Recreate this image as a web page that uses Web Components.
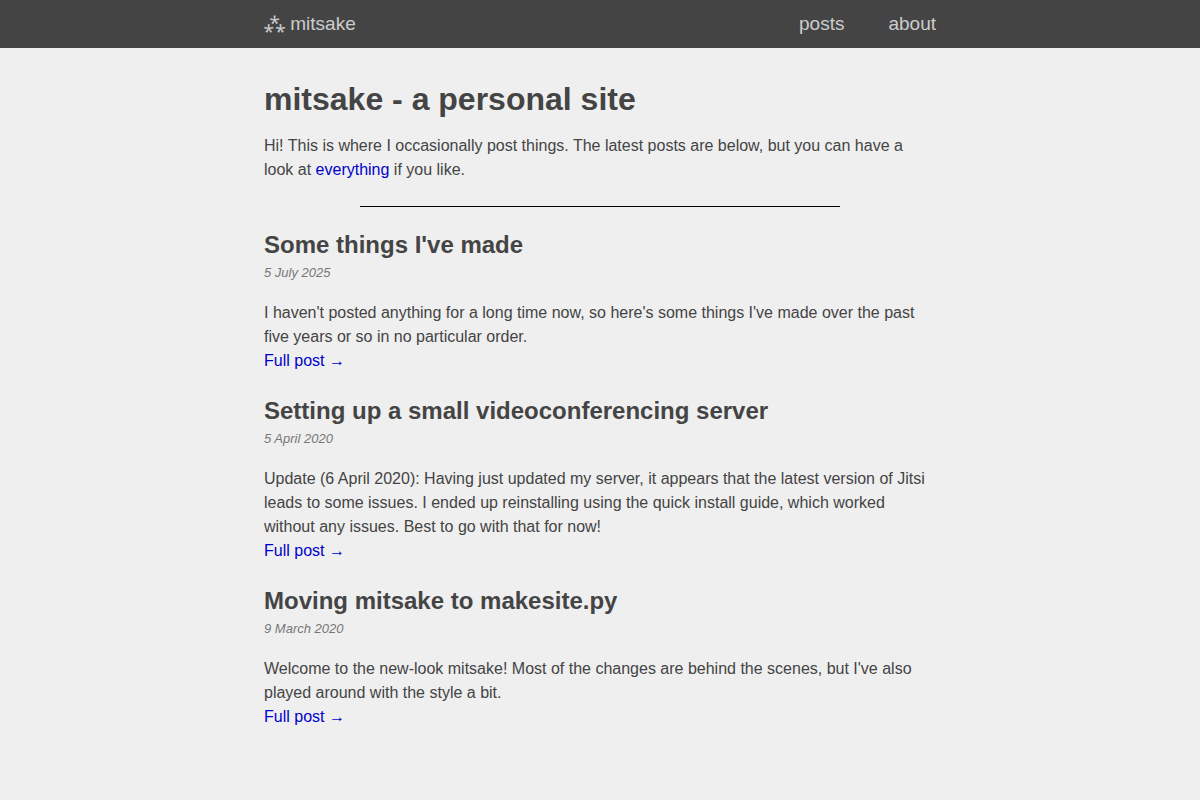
<!DOCTYPE html>
<html lang="en">
<head>
<meta charset="utf-8">
<meta name="viewport" content="width=device-width, initial-scale=1">
<title>mitsake</title>
<style>
  body {
    margin: 0;
    background: #efefef;
    color: #444;
    font: 16px/24px "Liberation Sans", Arial, sans-serif;
  }
  a { color: #0000cc; text-decoration: none; }
</style>
</head>
<body>
<site-header></site-header>
<site-main>
  <site-intro heading="mitsake - a personal site">Hi! This is where I occasionally post things. The latest posts are below, but you can have a look at <a href="#posts">everything</a> if you like.</site-intro>
  <post-summary heading="Some things I've made" date="5 July 2025" href="#made">I haven't posted anything for a long time now, so here's some things I've made over the past five years or so in no particular order.</post-summary>
  <post-summary heading="Setting up a small videoconferencing server" date="5 April 2020" href="#video">Update (6 April 2020): Having just updated my server, it appears that the latest version of Jitsi leads to some issues. I ended up reinstalling using the quick install guide, which worked without any issues. Best to go with that for now!</post-summary>
  <post-summary heading="Moving mitsake to makesite.py" date="9 March 2020" href="#makesite">Welcome to the new-look mitsake! Most of the changes are behind the scenes, but I've also played around with the style a bit.</post-summary>
</site-main>
<script>
class SiteHeader extends HTMLElement {
  connectedCallback() {
    this.attachShadow({ mode: "open" }).innerHTML = `
      <style>
        :host { display: block; background: #444; font-size: 19px; line-height: 48px; }
        nav { display: flex; justify-content: space-between; max-width: 672px; margin: 0 auto; }
        .links { display: flex; gap: 44px; }
        a { color: #ccc; text-decoration: none; }
      </style>
      <nav>
        <a href="#home">⁂ mitsake</a>
        <div class="links"><a href="#posts">posts</a><a href="#about">about</a></div>
      </nav>`;
  }
}
class SiteMain extends HTMLElement {
  connectedCallback() {
    this.attachShadow({ mode: "open" }).innerHTML = `
      <style>
        :host { display: block; }
        main { max-width: 672px; margin: 0 auto; padding: 32px 0 48px; }
      </style>
      <main><slot></slot></main>`;
  }
}
class SiteIntro extends HTMLElement {
  connectedCallback() {
    this.attachShadow({ mode: "open" }).innerHTML = `
      <style>
        :host { display: block; }
        h1 { margin: 0 0 16px; font-size: 32px; line-height: 38px; }
        p { margin: 0; }
        hr { width: 480px; max-width: 100%; margin: 24px auto; border: 0; border-top: 1px solid #000; }
      </style>
      <h1></h1>
      <p><slot></slot></p>
      <hr>`;
    this.shadowRoot.querySelector("h1").textContent = this.getAttribute("heading");
  }
}
class PostSummary extends HTMLElement {
  connectedCallback() {
    this.attachShadow({ mode: "open" }).innerHTML = `
      <style>
        :host { display: block; margin-bottom: 24px; }
        h2 { margin: 0 0 2px; font-size: 24px; line-height: 28px; }
        time { display: block; margin-bottom: 16px; color: #777; font-size: 13px; font-style: italic; line-height: 24px; }
        p { margin: 0; }
        a { color: #0000cc; text-decoration: none; }
      </style>
      <article>
        <h2></h2>
        <time></time>
        <p><slot></slot></p>
        <a>Full post →</a>
      </article>`;
    const root = this.shadowRoot;
    root.querySelector("h2").textContent = this.getAttribute("heading");
    root.querySelector("time").textContent = this.getAttribute("date");
    root.querySelector("a").href = this.getAttribute("href");
  }
}
customElements.define("site-header", SiteHeader);
customElements.define("site-main", SiteMain);
customElements.define("site-intro", SiteIntro);
customElements.define("post-summary", PostSummary);
</script>
</body>
</html>
